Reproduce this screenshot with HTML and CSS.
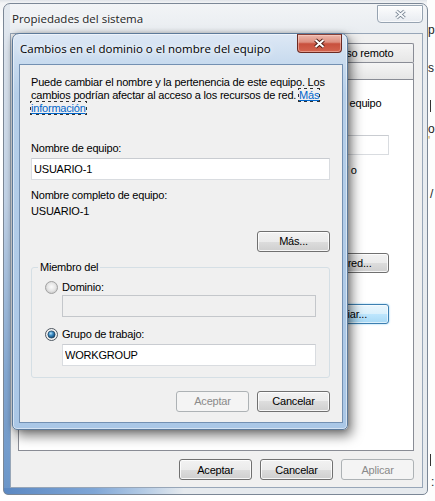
FILE: index.html
```html
<!DOCTYPE html>
<html lang="es">
<head>
<meta charset="utf-8">
<title>Propiedades del sistema</title>
<link rel="stylesheet" href="styles.css">
</head>
<body>
<div class="desktop">
  <div class="win-far">
    <span class="frag f1">p</span>
    <span class="frag f2">s</span>
    <span class="frag-bar b1"></span>
    <span class="frag f3">o</span>
    <span class="frag f4">'</span>
    <span class="frag f5">/</span>
    <span class="frag-bar b2"></span>
    <span class="frag f6">:</span>
  </div>

  <section class="win win-back">
    <header class="titlebar">
      <h1 class="title">Propiedades del sistema</h1>
      <button class="close close-inactive" aria-label="Cerrar">
        <svg width="13" height="11" viewBox="0 0 13 11"><path d="M2.5 2 L10.5 9 M10.5 2 L2.5 9" stroke="#6f7d8c" stroke-width="3.6" fill="none"/><path d="M2.5 2 L10.5 9 M10.5 2 L2.5 9" stroke="#f6f8fa" stroke-width="1.8" fill="none"/></svg>
      </button>
    </header>
    <div class="client back-client">
      <div class="tabs">
        <div class="tabrow tabrow-back">
          <div class="tab tab-grow">Protección del sistema</div>
          <div class="tab tab-remote">Acceso remoto</div>
        </div>
        <div class="tabrow tabrow-front">
          <div class="tab tab-selected">Nombre de equipo</div>
          <div class="tab">Hardware</div>
          <div class="tab tab-grow tab-left">Opciones avanzadas</div>
        </div>
      </div>
      <div class="panel">
        <div class="intro">
          <svg class="pc-icon" width="32" height="32" viewBox="0 0 32 32"><rect x="3" y="4" width="26" height="18" rx="1" fill="#3a6ea5" stroke="#444"/><rect x="5" y="6" width="22" height="14" fill="#8fc3ee"/><rect x="12" y="22" width="8" height="4" fill="#999"/><rect x="8" y="26" width="16" height="2" fill="#777"/></svg>
          <p>Windows usa la siguiente información para identificar su equipo en la red.</p>
        </div>
        <div class="props">
          <label class="desc-label" for="desc">Descripción del equipo:</label>
          <input class="field desc-field" id="desc" type="text" value="">
          <p class="example">Por ejemplo: "Equipo de la cocina" o "Equipo de María".</p>
          <span class="k1">Nombre completo de equipo:</span><span class="v1">USUARIO-1</span>
          <span class="k2">Grupo de trabajo:</span><span class="v2">WORKGROUP</span>
        </div>
        <div class="action-row first">
          <p>Para usar un asistente para unirse a un dominio o grupo de trabajo, haga clic en Id. de red.</p>
          <button class="btn btn-panel">Id. de red...</button>
        </div>
        <div class="action-row">
          <p>Para cambiar el nombre de este equipo o cambiar su dominio o grupo de trabajo, haga clic en Cambiar.</p>
          <button class="btn btn-panel btn-change btn-default">Cambiar...</button>
        </div>
      </div>
      <div class="btnrow">
        <button class="btn">Aceptar</button>
        <button class="btn">Cancelar</button>
        <button class="btn" disabled>Aplicar</button>
      </div>
    </div>
  </section>

  <section class="win dlg">
    <header class="titlebar">
      <h2 class="title">Cambios en el dominio o el nombre del equipo</h2>
      <button class="close close-active" aria-label="Cerrar">
        <svg width="13" height="11" viewBox="0 0 13 11"><path d="M2.5 2 L10.5 9 M10.5 2 L2.5 9" stroke="#4d1a13" stroke-width="3.8" fill="none"/><path d="M2.5 2 L10.5 9 M10.5 2 L2.5 9" stroke="#ffffff" stroke-width="2" fill="none"/></svg>
      </button>
    </header>
    <div class="client dlg-client">
      <p class="dlg-intro">Puede cambiar el nombre y la pertenencia de este equipo. Los cambios podrían afectar al acceso a los recursos de red. <a class="link" href="#">Más información</a></p>
      <label class="lbl lbl-name" for="pcname">Nombre de equipo:</label>
      <input class="field" id="pcname" type="text" value="USUARIO-1">
      <span class="lbl lbl-full">Nombre completo de equipo:</span>
      <span class="value">USUARIO-1</span>
      <button class="btn btn-more">Más...</button>
      <fieldset class="member">
        <legend>Miembro del</legend>
        <label class="radio radio-first">
          <svg width="13" height="13" viewBox="0 0 13 13"><defs><radialGradient id="rOff" cx="50%" cy="45%" r="55%"><stop offset="0" stop-color="#fbfbfb"/><stop offset="0.6" stop-color="#e6e6e6"/><stop offset="1" stop-color="#c9c9c9"/></radialGradient></defs><circle cx="6.5" cy="6.5" r="6" fill="url(#rOff)" stroke="#a2a2a2"/></svg>
          <span>Dominio:</span>
        </label>
        <input class="field field-indent" type="text" value="" disabled aria-label="Dominio">
        <label class="radio radio-second">
          <svg width="13" height="13" viewBox="0 0 13 13"><defs><radialGradient id="rOn" cx="40%" cy="35%" r="65%"><stop offset="0" stop-color="#b7e5fb"/><stop offset="0.45" stop-color="#3d8cc4"/><stop offset="1" stop-color="#0f4470"/></radialGradient></defs><circle cx="6.5" cy="6.5" r="6" fill="#f2f2f2" stroke="#4e5760"/><circle cx="6.5" cy="6.5" r="3.6" fill="url(#rOn)" stroke="#1d3f5a" stroke-width="0.7"/></svg>
          <span>Grupo de trabajo:</span>
        </label>
        <input class="field field-indent field-wg" type="text" value="WORKGROUP" aria-label="Grupo de trabajo">
      </fieldset>
      <div class="btnrow dlg-btns">
        <button class="btn" disabled>Aceptar</button>
        <button class="btn">Cancelar</button>
      </div>
    </div>
  </section>
</div>
</body>
</html>
```
FILE: styles.css
```css
* { box-sizing: border-box; }
html, body { margin: 0; padding: 0; }
body {
  width: 435px;
  height: 501px;
  overflow: hidden;
  background: #ffffff;
  font-family: "Liberation Sans", Arial, sans-serif;
  font-size: 11px;
  letter-spacing: -0.2px;
  color: #000;
}
p { margin: 0; }

.desktop {
  position: relative;
  width: 435px;
  height: 501px;
  overflow: hidden;
  background: linear-gradient(#dfe3e8 0, #f3f4f6 3px, #ffffff 30px);
}

/* window far right, behind */
.win-far {
  position: absolute;
  left: 427px;
  top: 0;
  width: 30px;
  height: 501px;
  background: #fdfdfd;
  display: flex;
  flex-direction: column;
  padding-left: 1px;
  font-size: 12px;
  line-height: 12px;
  color: #222;
}
.frag { display: block; height: 12px; }
.f1 { margin-top: 24px; }
.f2 { margin-top: 26px; }
.frag-bar { display: block; width: 1px; height: 12px; background: #333; margin-left: 2px; }
.b1 { margin-top: 26px; }
.f3 { margin-top: 11px; }
.f4 { margin-top: 0; color: #c9a449; }
.f5 { margin-top: 41px; padding-left: 2px; }
.b2 { margin-top: 254px; }
.f6 { margin-top: 10px; padding-left: 3px; }

/* generic window */
.win {
  position: absolute;
  display: flex;
  flex-direction: column;
}
.titlebar {
  flex: none;
  display: flex;
  align-items: center;
  justify-content: space-between;
}
.title {
  margin: 0;
  font-family: "Open Sans", "Noto Sans", sans-serif;
  font-weight: 400;
  font-size: 11.5px;
  line-height: 1;
  letter-spacing: 0;
  white-space: nowrap;
  text-shadow: 0 0 5px #fff, 0 0 9px #fff;
}
.close {
  flex: none;
  align-self: flex-start;
  display: flex;
  align-items: center;
  justify-content: center;
  padding: 0;
  cursor: default;
}
.client {
  flex: 1;
  min-height: 0;
  display: flex;
  flex-direction: column;
  background: #f0f0f0;
  border: 1px solid #8f9fb2;
}

/* buttons */
.btn {
  width: 73px;
  height: 21px;
  padding: 0;
  font: inherit;
  letter-spacing: inherit;
  color: #000;
  border: 1px solid #707070;
  border-radius: 3px;
  background: linear-gradient(#f2f2f2 0, #ebebeb 50%, #dddddd 50%, #cfcfcf 100%);
  box-shadow: inset 0 0 0 1px rgba(255,255,255,0.8);
  cursor: default;
}
.btn:disabled {
  color: #8a8a8a;
  border-color: #adb2b5;
  background: #f4f4f4;
  box-shadow: none;
}
.btn-default {
  border-color: #3c7fb1;
  background: linear-gradient(#eaf6fd 0, #d9f0fc 50%, #bee6fd 50%, #a7d9f5 100%);
  box-shadow: inset 0 0 0 1px rgba(255,255,255,0.6), 0 0 2px #7cc4ef;
}

/* inputs */
.field {
  display: block;
  width: 100%;
  height: 22px;
  margin: 3px 0 0;
  padding: 0 2px;
  font: inherit;
  letter-spacing: inherit;
  color: #000;
  background: #ffffff;
  border: 1px solid #d9dce0;
  border-top-color: #c9ccd1;
  border-radius: 0;
  outline: none;
}
.field:disabled {
  background: #f0f0f0;
  border-color: #c4c7cb;
}

/* background window */
.win-back {
  left: 3px;
  top: 3px;
  width: 425px;
  height: 492px;
  border: 1px solid #7b8796;
  border-radius: 7px 7px 5px 5px;
  padding: 0 4px 6px 6px;
  background:
    linear-gradient(to right, #5b88c2 0, #7fa6d6 90px, #b4cbe5 140px, rgba(236,240,244,0) 180px) left bottom / 100% 6px no-repeat,
    linear-gradient(#e4e9ef 0, #c3d4e8 40%, #86aad4 75%, #6a95c8 100%) left top / 6px 100% no-repeat,
    linear-gradient(#f2f4f6 0, #e9edf1 28px, #e6eaee 100%);
}
.win-back .titlebar { height: 29px; }
.win-back .title { padding-left: 2px; color: #1e1e1e; }
.close-inactive {
  width: 46px;
  height: 18px;
  margin-top: 1px;
  border: 1px solid #96a3b1;
  border-radius: 0 0 4px 4px;
  background: linear-gradient(rgba(255,255,255,0.8), rgba(228,233,239,0.6));
  box-shadow: inset 0 0 0 1px rgba(255,255,255,0.7);
}
.back-client {
  padding: 9px 8px 7px 7px;
  border-color: #97a6b8;
}
.tabs { flex: none; }
.tabrow { display: flex; }
.tabrow-back { height: 19px; }
.tabrow-front { height: 17px; }
.tab {
  display: flex;
  align-items: center;
  justify-content: center;
  white-space: nowrap;
  padding: 0 6px;
  margin-right: -1px;
  border: 1px solid #898c95;
  border-bottom: 0;
  border-radius: 2px 2px 0 0;
  background: linear-gradient(#f5f5f5, #e6e6e6);
}
.tab:last-child { margin-right: 0; }
.tab-grow { flex: 1; }
.tab-remote { flex: 0 0 112px; }
.tab-left { justify-content: flex-start; }
.tab-selected { background: #ffffff; }

.panel {
  flex: 1;
  min-height: 0;
  overflow: hidden;
  background: #ffffff;
  border: 1px solid #898c95;
  padding: 17px 24px 0 12px;
  line-height: 13px;
}
.intro {
  display: flex;
  align-items: flex-start;
  gap: 21px;
}
.pc-icon { flex: none; }
.intro p { flex: 1; }
.props {
  display: grid;
  grid-template-columns: 155px 1fr;
  align-items: center;
  margin-top: 6px;
}
.props .desc-field { height: 20px; margin: 0; }
.example { grid-column: 2; margin-top: 9px; }
.k1, .v1 { margin-top: 13px; }
.k2, .v2 { margin-top: 8px; }
.action-row {
  display: flex;
  align-items: flex-start;
  gap: 10px;
}
.action-row.first { margin-top: 16px; height: 51px; }
.action-row p { flex: 1; }
.action-row .btn-panel { flex: none; width: 88px; height: 20px; }
.action-row .btn-change { width: 92px; }

.btnrow {
  flex: none;
  display: flex;
  justify-content: flex-end;
  gap: 8px;
  margin-top: 8px;
}

/* dialog */
.dlg {
  left: 12px;
  top: 33px;
  width: 336px;
  height: 397px;
  border: 1px solid #5d7a9a;
  border-radius: 7px 7px 5px 5px;
  padding: 0 4px 6px 6px;
  background: linear-gradient(#dde8f5 0, #cadcef 26px, #b6cfe9 60px, #aac7e6 100%);
  box-shadow: 4px 6px 12px rgba(0,0,0,0.5), 0 0 5px rgba(0,0,0,0.25), inset 0 0 0 1px rgba(255,255,255,0.5);
}
.dlg .titlebar { height: 30px; }
.dlg .title { padding-left: 1px; color: #000; }
.close-active {
  width: 45px;
  height: 19px;
  margin-right: 1px;
  border: 1px solid #6b2a22;
  border-top-color: #874038;
  border-radius: 0 0 4px 4px;
  background: linear-gradient(#ecb7ab 0, #de8f80 42%, #c8503d 52%, #d4644f 100%);
  box-shadow: inset 0 0 0 1px rgba(255,220,210,0.45);
}
.dlg-client {
  padding: 11px 12px 0 11px;
  border-color: #7390b2;
  line-height: 13px;
}
.link {
  color: #0066cc;
  text-decoration: underline;
  outline: 1px dotted #333;
}
.lbl-name { margin-top: 27px; }
.lbl-full { margin-top: 9px; }
.value { margin-top: 3px; }
.btn-more { align-self: flex-end; margin-top: 13px; }

.member {
  margin: 9px 0 0;
  padding: 0 13px 11px 13px;
  min-width: 0;
  border: 1px solid #d5dfe5;
  border-radius: 3px;
}
.member legend {
  padding: 0 2px;
  margin-left: -7px;
  line-height: 12px;
}
.radio {
  display: flex;
  align-items: center;
  gap: 4px;
  height: 13px;
}
.radio svg { flex: none; }
.radio-first { margin-top: 8px; }
.radio-second { margin-top: 11px; }
.member .field-indent { margin-left: 17px; width: calc(100% - 17px); }
.member .field-indent[disabled] { margin-top: 1px; }
.dlg-btns { margin-top: 13px; }
```
